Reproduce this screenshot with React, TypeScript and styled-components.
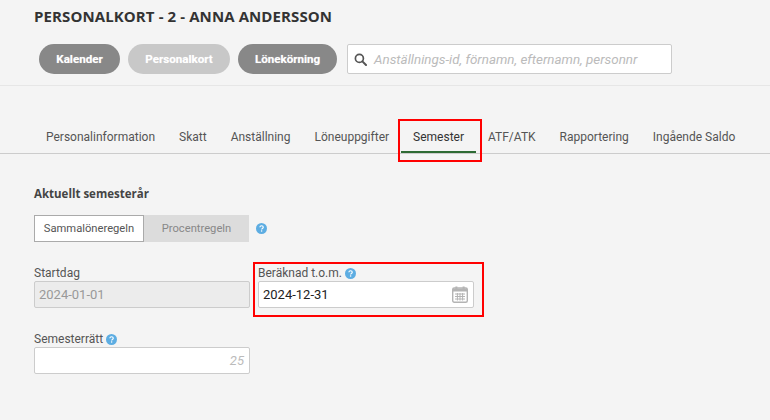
import styled, { createGlobalStyle } from "styled-components";

const GlobalStyle = createGlobalStyle`
  html, body {
    margin: 0;
    padding: 0;
    background: #f4f4f4;
  }
  body {
    font-family: Roboto, "Liberation Sans", sans-serif;
    color: #555;
  }
`

const HelpIcon = ({ size = 11 }: { size?: number }) => (
    <svg width={size} height={size} viewBox="0 0 12 12">
        <circle cx="6" cy="6" r="6" fill="#5dade2" />
        <path d="M4.2 4.7C4.3 3.6 5 3 6.1 3c1.1 0 1.8.6 1.8 1.5 0 .7-.4 1.1-1 1.5-.5.3-.7.6-.7 1.1" fill="none" stroke="#fff" strokeWidth="1.3" />
        <rect x="5.4" y="8" width="1.4" height="1.4" fill="#fff" />
    </svg>
)

const SearchIcon = () => (
    <svg width="13" height="13" viewBox="0 0 13 13">
        <circle cx="5.4" cy="5.4" r="4" fill="none" stroke="#555" strokeWidth="1.7" />
        <path d="M8.4 8.4l3.6 3.6" stroke="#555" strokeWidth="2" strokeLinecap="round" />
    </svg>
)

const CalendarIcon = () => (
    <svg width="16" height="17" viewBox="0 0 16 17">
        <rect x="0.7" y="2" width="14.6" height="14.2" rx="1.5" fill="none" stroke="#b4b4b4" strokeWidth="1.4" />
        <rect x="1" y="2.5" width="14" height="3" fill="#b4b4b4" />
        <rect x="3.4" y="0.5" width="2" height="3" fill="#b4b4b4" />
        <rect x="10.6" y="0.5" width="2" height="3" fill="#b4b4b4" />
        <path d="M3 8h10M3 10.5h10M3 13h10M5.4 7v7.5M8 7v7.5M10.6 7v7.5" stroke="#b4b4b4" strokeWidth="1" />
    </svg>
)

const tabs = ["Personalinformation", "Skatt", "Anställning", "Löneuppgifter", "Semester", "ATF/ATK", "Rapportering", "Ingående Saldo"]

export default function App() {
    return (
        <Page>
            <GlobalStyle />
            <Header>
                <Title>PERSONALKORT - 2 - ANNA ANDERSSON</Title>
                <Toolbar>
                    <PillButton $width={81}>Kalender</PillButton>
                    <PillButton $width={102} $muted>Personalkort</PillButton>
                    <PillButton $width={99}>Lönekörning</PillButton>
                    <SearchBox>
                        <SearchIcon />
                        <SearchText>Anställnings-id, förnamn, efternamn, personnr</SearchText>
                    </SearchBox>
                </Toolbar>
            </Header>
            <TabBar>
                {tabs.map((tab) => (
                    <Tab key={tab} $active={tab === "Semester"}>{tab}</Tab>
                ))}
            </TabBar>
            <Content>
                <SectionTitle>Aktuellt semesterår</SectionTitle>
                <SegmentRow>
                    <Segment $active $width={110}>Sammalöneregeln</Segment>
                    <Segment $width={105}>Procentregeln</Segment>
                    <SegmentHelp><HelpIcon /></SegmentHelp>
                </SegmentRow>
                <FieldRow>
                    <Field>
                        <Label>Startdag</Label>
                        <InputBox $disabled>2024-01-01</InputBox>
                    </Field>
                    <Field $highlight>
                        <Label>Beräknad t.o.m. <HelpIcon /></Label>
                        <InputBox $dark>
                            2024-12-31
                            <CalendarIcon />
                        </InputBox>
                    </Field>
                </FieldRow>
                <Field>
                    <Label>Semesterrätt <HelpIcon /></Label>
                    <InputBox $numeric>25</InputBox>
                </Field>
            </Content>
        </Page>
    )
}

const Page = styled.div`
  width: 770px;
  height: 420px;
  overflow: hidden;
  background: #f4f4f4;
`

const Header = styled.header`
  height: 86px;
  box-sizing: border-box;
  padding: 7px 0 0 34px;
  border-bottom: 1px solid #e6e6e6;
`

const Title = styled.h1`
  margin: 0;
  font-family: "Open Sans", sans-serif;
  font-size: 15px;
  line-height: 18px;
  font-weight: 700;
  color: #333;
  letter-spacing: 0.1px;
`

const Toolbar = styled.div`
  display: flex;
  align-items: center;
  gap: 8px;
  margin: 19px 0 0 5px;
`

const PillButton = styled.div<{ $width: number; $muted?: boolean }>`
  width: ${(p) => p.$width}px;
  height: 30px;
  border-radius: 15px;
  background: ${(p) => (p.$muted ? "#c8c8c8" : "#888")};
  color: #fff;
  font-size: 11.6px;
  font-weight: 700;
  text-shadow: 0 0 1px rgba(255, 255, 255, 0.5);
  display: flex;
  align-items: center;
  justify-content: center;
`

const SearchBox = styled.div`
  width: 325px;
  height: 30px;
  box-sizing: border-box;
  margin-left: 2px;
  padding-left: 6px;
  background: #fff;
  border: 1px solid #ccc;
  border-radius: 2px;
  display: flex;
  align-items: center;
  gap: 7px;
`

const SearchText = styled.span`
  font-size: 13.4px;
  font-style: italic;
  color: #bbb;
`

const TabBar = styled.nav`
  display: flex;
  height: 68px;
  box-sizing: border-box;
  padding: 33px 0 0 34px;
  border-bottom: 1px solid #ccc;
`

const Tab = styled.div<{ $active?: boolean }>`
  position: relative;
  height: 34px;
  box-sizing: border-box;
  padding: 11px 12px 0;
  font-size: 12px;
  line-height: 14px;
  color: ${(p) => (p.$active ? "#333" : "#555")};
  border-bottom: 2px solid ${(p) => (p.$active ? "#2e6b34" : "transparent")};

  ${(p) => p.$active && `
    &::after {
      content: "";
      position: absolute;
      left: -3px;
      right: -6px;
      top: 0;
      height: 43px;
      box-sizing: border-box;
      border: 2px solid #f00;
    }
  `}
`

const Content = styled.main`
  padding: 32px 0 0 34px;
`

const SectionTitle = styled.h2`
  margin: 0;
  font-family: "Open Sans", sans-serif;
  font-size: 11.5px;
  line-height: 15px;
  font-weight: 700;
  color: #444;
`

const SegmentRow = styled.div`
  display: flex;
  align-items: center;
  margin-top: 14px;
`

const Segment = styled.div<{ $active?: boolean; $width: number }>`
  width: ${(p) => p.$width}px;
  height: 27px;
  box-sizing: border-box;
  display: flex;
  align-items: center;
  justify-content: center;
  font-size: 11.2px;
  color: ${(p) => (p.$active ? "#555" : "#888")};
  background: ${(p) => (p.$active ? "#fff" : "#dcdcdc")};
  border: 1px solid ${(p) => (p.$active ? "#aaa" : "#dcdcdc")};
`

const SegmentHelp = styled.span`
  display: flex;
  margin-left: 7px;
`

const FieldRow = styled.div`
  display: flex;
  gap: 8px;
  margin: 24px 0 24px;
`

const Field = styled.div<{ $highlight?: boolean }>`
  position: relative;
  width: 216px;

  ${(p) => p.$highlight && `
    &::after {
      content: "";
      position: absolute;
      left: -5px;
      right: -10px;
      top: -4px;
      height: 55px;
      box-sizing: border-box;
      border: 2px solid #f00;
    }
  `}
`

const Label = styled.label`
  display: flex;
  align-items: center;
  gap: 3px;
  height: 14px;
  margin-bottom: 1px;
  font-size: 12px;
  color: #555;
`

const InputBox = styled.div<{ $disabled?: boolean; $dark?: boolean; $numeric?: boolean }>`
  height: 27px;
  box-sizing: border-box;
  padding: 0 5px 0 4px;
  display: flex;
  align-items: center;
  justify-content: ${(p) => (p.$dark ? "space-between" : p.$numeric ? "flex-end" : "flex-start")};
  font-size: 13px;
  font-style: ${(p) => (p.$numeric ? "italic" : "normal")};
  color: ${(p) => (p.$dark ? "#222" : p.$numeric ? "#bbb" : "#999")};
  background: ${(p) => (p.$disabled ? "#ececec" : "#fff")};
  border: 1px solid #ccc;
  border-radius: 2px;
`
